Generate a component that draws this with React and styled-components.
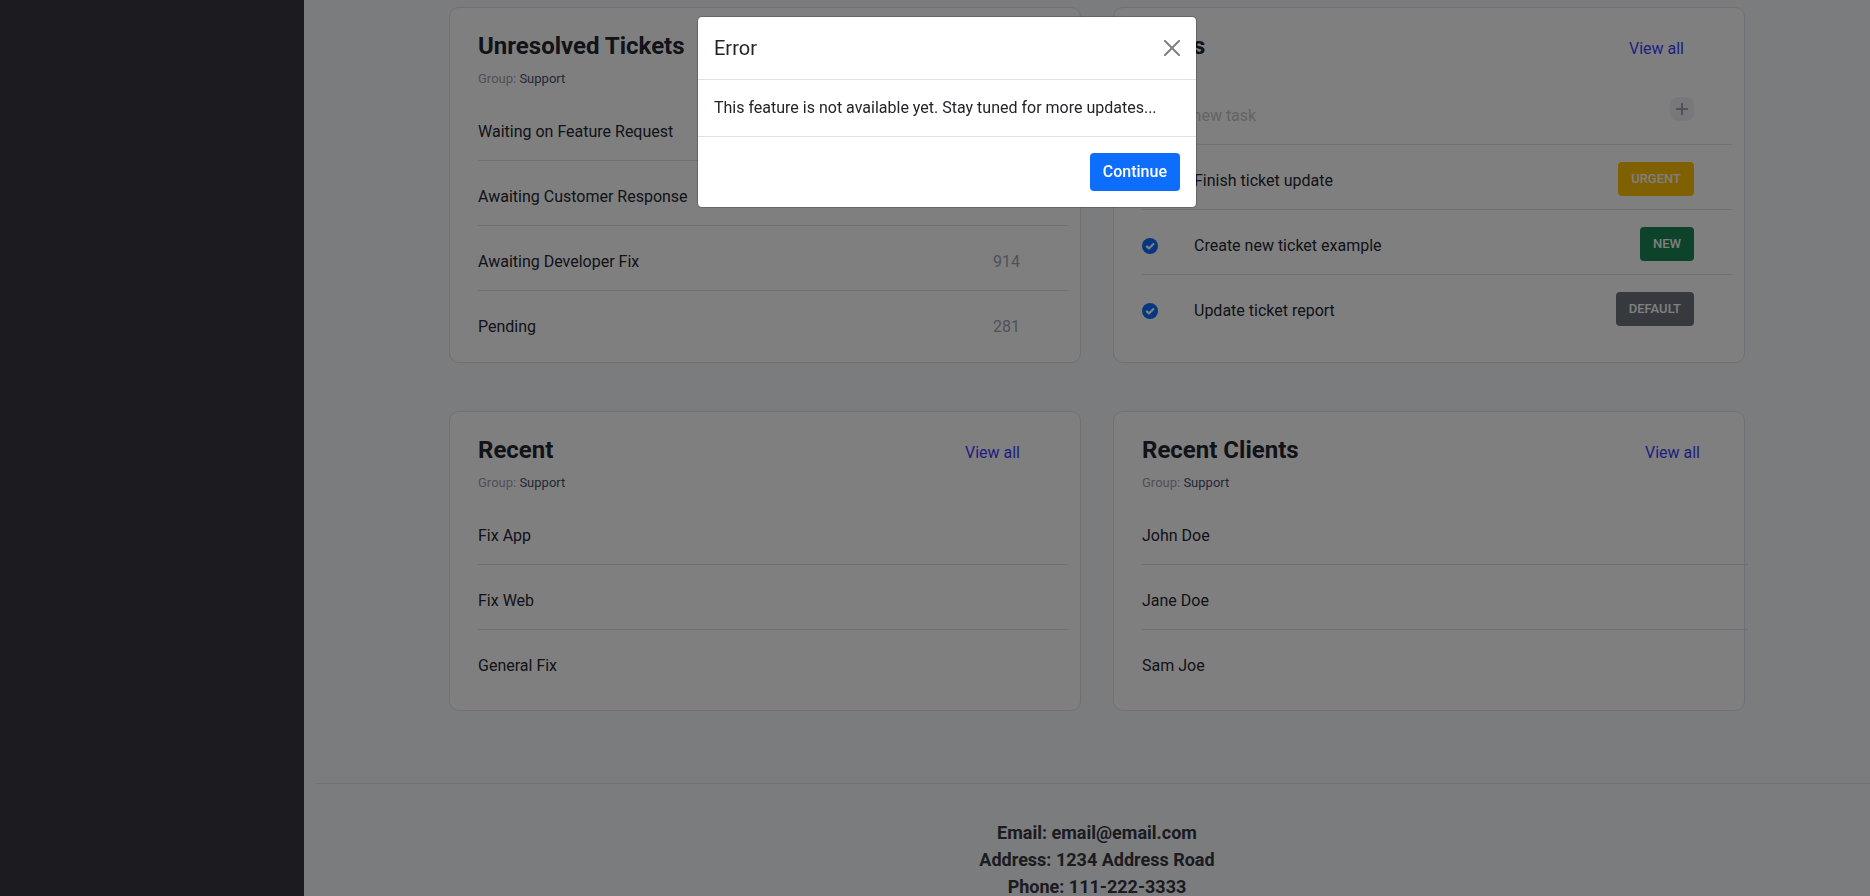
import React from 'react';
import styled, { createGlobalStyle } from 'styled-components';

const GlobalStyle = createGlobalStyle`
  *, *::before, *::after { box-sizing: border-box; }
  body {
    margin: 0;
    height: 100vh;
    overflow: hidden;
    background: #f7f8fc;
    color: #212529;
    font-family: Roboto, "Liberation Sans", sans-serif;
    font-size: 16px;
    line-height: 24px;
  }
  h2, h5, p, ul { margin: 0; padding: 0; }
  button, input { font-family: inherit; }
`;

const Page = styled.div`
  display: flex;
  min-height: 100vh;
`;

const Sidebar = styled.aside`
  flex: 0 0 304px;
  background: #363740;
`;

const Main = styled.main`
  flex: 1;
  min-width: 0;
  padding: 7px 0 0 12px;
`;

const CardGrid = styled.div`
  max-width: 1304px;
  margin: 0 auto;
  padding-left: 8px;
  display: grid;
  grid-template-columns: 1fr 1fr;
  gap: 48px 32px;
`;

const Card = styled.section`
  min-width: 0;
  padding: 20px 12px ${(p) => p.$bottom}px 28px;
  background: #fff;
  border: 1px solid #dfe0eb;
  border-radius: 10px;
`;

const CardHead = styled.header`
  display: flex;
  justify-content: space-between;
  align-items: center;
  height: 36px;
  padding-right: ${(p) => p.$right}px;
`;

const Title = styled.h2`
  font-size: 24px;
  line-height: 36px;
  font-weight: 700;
  color: #252733;
`;

const ViewAll = styled.a`
  padding-top: 6px;
  color: #3f3fff;
  text-decoration: none;
`;

const Group = styled.p`
  && { margin-top: 5px; }
  font-size: 13px;
  line-height: 20px;
  color: #9fa2b4;
`;

const GroupName = styled.span`
  color: #4b506d;
`;

const Rows = styled.ul`
  && { margin-top: ${(p) => p.$top}px; }
  && { margin-right: ${(p) => (p.$wide ? '-16px' : '0')}; }
  list-style: none;
`;

const Row = styled.li`
  display: flex;
  align-items: center;
  justify-content: space-between;
  height: 65px;
  padding: 8px 48px 0 0;
  color: #252733;
  border-bottom: 1px solid #dfe0eb;
  &:last-child { border-color: transparent; }
`;

const TaskRow = styled(Row)`
  padding-right: 38px;
`;

const Count = styled.span`
  color: #9fa2b4;
`;

const TaskInput = styled.input`
  flex: 1;
  min-width: 0;
  height: 24px;
  margin-bottom: 2px;
  padding: 0;
  border: 0;
  outline: 0;
  background: transparent;
  font-size: 16px;
  &::placeholder { color: #c5c7cd; opacity: 1; }
`;

const AddButton = styled.button`
  display: flex;
  align-items: center;
  justify-content: center;
  width: 24px;
  height: 24px;
  margin-bottom: 14px;
  padding: 0;
  border: 0;
  border-radius: 8px;
  background: #f0f1f7;
  color: #9fa2b4;
`;

const TaskLabel = styled.label`
  display: flex;
  align-items: center;
  gap: 36px;
`;

const CheckBox = styled.input`
  position: absolute;
  width: 16px;
  height: 16px;
  margin: 0;
  opacity: 0;
`;

const Tag = styled.button`
  height: 34px;
  margin-bottom: 4px;
  padding: 0 13px 2px;
  border: 0;
  border-radius: 4px;
  background: ${(p) => p.$color};
  color: #fff;
  font-size: 13px;
  font-weight: 500;
  text-transform: uppercase;
`;

const Footer = styled.footer`
  margin-top: 72px;
  padding: 35px 0 40px 8px;
  border-top: 1px solid #dfe0eb;
  text-align: center;
  font-size: 18px;
  line-height: 27px;
  font-weight: 700;
  color: #363740;
`;

const Backdrop = styled.div`
  position: fixed;
  inset: 0;
  display: flex;
  justify-content: center;
  align-items: flex-start;
  padding: 16px 0 0 24px;
  background: rgba(0, 0, 0, 0.5);
`;

const Dialog = styled.div`
  width: 500px;
  max-width: 100%;
  background: #fff;
  background-clip: padding-box;
  border: 1px solid rgba(0, 0, 0, 0.2);
  border-radius: 5px;
`;

const DialogHead = styled.div`
  display: flex;
  align-items: center;
  justify-content: space-between;
  padding: 16px;
  border-bottom: 1px solid #dee2e6;
`;

const DialogTitle = styled.h5`
  font-size: 20px;
  line-height: 30px;
  font-weight: 400;
`;

const CloseButton = styled.button`
  display: flex;
  padding: 0;
  border: 0;
  background: transparent;
  color: #000;
  opacity: 0.5;
`;

const DialogBody = styled.p`
  && { padding: 16px; }
`;

const DialogFoot = styled.div`
  display: flex;
  justify-content: flex-end;
  padding: 16px;
  border-top: 1px solid #dee2e6;
`;

const ContinueButton = styled.button`
  height: 38px;
  padding: 0 13px 2px;
  border: 0;
  border-radius: 4px;
  background: #0d6efd;
  color: #fff;
  font-size: 16px;
  font-weight: 500;
`;

const CheckIcon = () => (
  <svg width="16" height="16" viewBox="0 0 16 16" aria-hidden="true">
    <circle cx="8" cy="8" r="8" fill="#0d6efd" />
    <path d="M4.8 8.4 7 10.4 11.4 6" fill="none" stroke="#fff" strokeWidth="2.1" strokeLinecap="round" strokeLinejoin="round" />
  </svg>
);

const PlusIcon = () => (
  <svg width="12" height="12" viewBox="0 0 12 12" fill="currentColor" aria-hidden="true">
    <rect x="5" y="0" width="2" height="12" rx="0.5" />
    <rect x="0" y="5" width="12" height="2" rx="0.5" />
  </svg>
);

const CloseIcon = () => (
  <svg width="16" height="16" viewBox="0 0 16 16" fill="currentColor" aria-hidden="true">
    <path d="M.293.293a1 1 0 011.414 0L8 6.586 14.293.293a1 1 0 111.414 1.414L9.414 8l6.293 6.293a1 1 0 01-1.414 1.414L8 9.414l-6.293 6.293a1 1 0 01-1.414-1.414L6.586 8 .293 1.707a1 1 0 010-1.414z" />
  </svg>
);

const tickets = [
  { name: 'Waiting on Feature Request' },
  { name: 'Awaiting Customer Response' },
  { name: 'Awaiting Developer Fix', count: 914 },
  { name: 'Pending', count: 281 },
];

const tasks = [
  { name: 'Finish ticket update', tag: 'Urgent', color: '#ffc107' },
  { name: 'Create new ticket example', tag: 'New', color: '#198754' },
  { name: 'Update ticket report', tag: 'Default', color: '#6c757d' },
];

const SupportGroup = () => (
  <Group>Group: <GroupName>Support</GroupName></Group>
);

const ListCard = ({ title, items, right, wide, bottom, link = true }) => (
  <Card $bottom={bottom}>
    <CardHead $right={right}>
      <Title>{title}</Title>
      {link && <ViewAll href="#all">View all</ViewAll>}
    </CardHead>
    <SupportGroup />
    <Rows $top={7} $wide={wide}>
      {items.map((item) => (
        <Row key={item.name}>
          <span>{item.name}</span>
          {item.count && <Count>{item.count}</Count>}
        </Row>
      ))}
    </Rows>
  </Card>
);

const TasksCard = () => (
  <Card $bottom={0}>
    <CardHead $right={48}>
      <Title>Tasks</Title>
      <ViewAll href="#tasks">View all</ViewAll>
    </CardHead>
    <Rows $top={16}>
      <TaskRow>
        <TaskInput placeholder="Create new task" aria-label="Create new task" />
        <AddButton aria-label="Add task"><PlusIcon /></AddButton>
      </TaskRow>
      {tasks.map((task) => (
        <TaskRow key={task.name}>
          <TaskLabel>
            <CheckBox type="checkbox" defaultChecked />
            <CheckIcon />
            {task.name}
          </TaskLabel>
          <Tag $color={task.color}>{task.tag}</Tag>
        </TaskRow>
      ))}
    </Rows>
  </Card>
);

export default function App() {
  return (
    <>
      <GlobalStyle />
      <Page>
        <Sidebar />
        <Main>
          <CardGrid>
            <ListCard title="Unresolved Tickets" items={tickets} right={48} bottom={6} link={false} />
            <TasksCard />
            <ListCard
              title="Recent"
              items={[{ name: 'Fix App' }, { name: 'Fix Web' }, { name: 'General Fix' }]}
              right={48}
              bottom={15}
            />
            <ListCard
              title="Recent Clients"
              items={[{ name: 'John Doe' }, { name: 'Jane Doe' }, { name: 'Sam Joe' }]}
              right={32}
              bottom={15}
              wide
            />
          </CardGrid>
          <Footer>
            <p>Email: email@email.com</p>
            <p>Address: 1234 Address Road</p>
            <p>Phone: 111-222-3333</p>
          </Footer>
        </Main>
      </Page>
      <Backdrop>
        <Dialog role="dialog" aria-modal="true" aria-labelledby="error-title">
          <DialogHead>
            <DialogTitle id="error-title">Error</DialogTitle>
            <CloseButton aria-label="Close"><CloseIcon /></CloseButton>
          </DialogHead>
          <DialogBody>This feature is not available yet. Stay tuned for more updates...</DialogBody>
          <DialogFoot>
            <ContinueButton>Continue</ContinueButton>
          </DialogFoot>
        </Dialog>
      </Backdrop>
    </>
  );
}
